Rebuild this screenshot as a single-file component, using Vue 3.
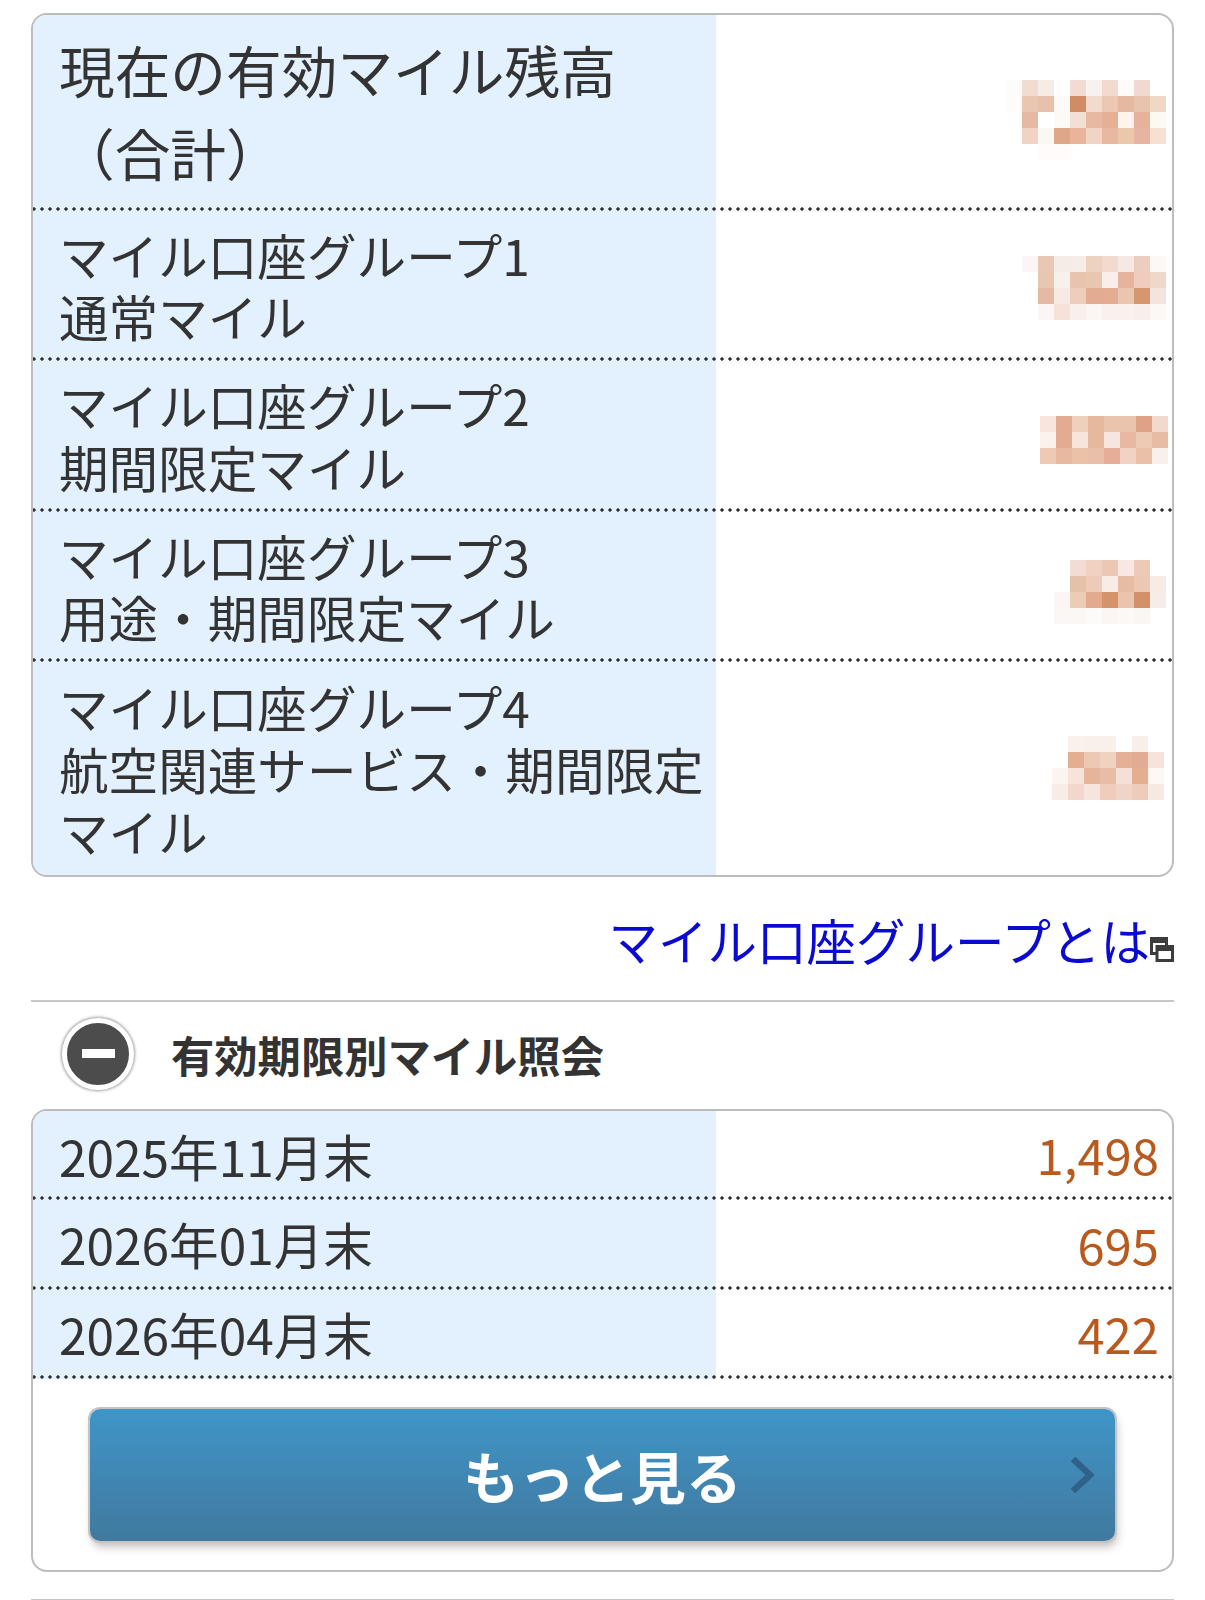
<script setup>
const hex = (s) => s.trim().split(/\s+/).map((c) => '#' + c)

const mosaics = {
  total: {
    cols: 10, right: 6, top: 9,
    cells: hex(`fefcfb f1ddcf f5ece5 ffffff f2dcd2 f8f2ee f2dace fefcfb f2d9cf ffffff
      fefcfb e8c6b0 e8c1ac fdfaf7 d08c62 f2dacc ecc8b4 e5b8a0 e8c4ae f0d8c4
      ffffff e6b9a2 ffffff fdf9f6 f4dfd5 e7b9a3 e6b096 fdf4ee e6b29b fef8f3
      ffffff f2d2c4 fbf7f3 dfa68a e8b49c f2d4c4 e8b8a0 eac8ac e6b4a0 f8e0d0
      ffffff ffffff fefbfa fefbfa ffffff ffffff ffffff ffffff ffffff ffffff`),
  },
  g1: {
    cols: 9, right: 6, top: 3.5,
    cells: hex(`faf6f3 e8c8b4 f6ece6 f6ece8 edd2c0 f2dbce f6e8e5 edcdbd fcf8f6
      ffffff e8c6b0 f8f0ec e9c3ad e9c6b0 f8eeea e6b49c efccbc f0d8c8
      ffffff e6b9a2 f6ebe3 efcdbb e3ac90 e4ac92 e9c6b0 d69670 f4e4e0
      ffffff fbf6f3 f6e2d8 f9f0ec fbf6f3 f9f1ee f9f1ee f8eeeb fbf8f5`),
  },
  g2: {
    cols: 8, right: 4, top: 5,
    cells: hex(`f8e6de e3ac90 efd0bc e6b89e ebc4ae ebc4ae e0a286 f3d8ce
      fbf2ec e3ac92 f7e4da e6b89e f7e6e0 e8b8a2 edcab4 e8bca4
      eecab6 e8b8a0 eac2a8 e8c0aa e6ae98 f2d2c4 e9c0a8 f9f0ec`),
  },
  g3: {
    cols: 7, right: 6, top: 6.5,
    cells: hex(`ffffff f2dcd4 efd2c2 ebc8b4 f9e8e2 eccab6 ffffff
      ffffff e6c0a8 ecccb8 f8ece6 e6bca4 ecc8b4 f8ebe6
      fbf6f3 ecccb4 e3aa8e d69268 eac4ac d49068 f7ede8
      fbf7f4 fbf7f4 fdfbf9 fbf5f3 fcf8f6 fbf6f2 ffffff`),
  },
  g4: {
    cols: 7, right: 8, top: -0.5,
    cells: hex(`ffffff faf0ec f9f0ea f9f0ea ffffff f9efea ffffff
      ffffff e4ae92 edc8b4 efd2c0 e6b096 e3ac92 f6e3dc
      fcf4f0 f6e4da e6b49a e8bca6 f4e0d8 e4ae90 fef8f4
      f8ece6 f2d8cc f7e4dc efccbc f0d4c8 eeccbc f8e8e2`),
  },
}

const groups = [
  { id: 'g1', lines: ['マイル口座グループ1', '通常マイル'] },
  { id: 'g2', lines: ['マイル口座グループ2', '期間限定マイル'] },
  { id: 'g3', lines: ['マイル口座グループ3', '用途・期間限定マイル'] },
  { id: 'g4', lines: ['マイル口座グループ4', '航空関連サービス・期間限定マイル'] },
]

const expiries = [
  { date: '2025年11月末', miles: '1,498' },
  { date: '2026年01月末', miles: '695' },
  { date: '2026年04月末', miles: '422' },
]

const mosaicStyle = (m) => ({
  gridTemplateColumns: `repeat(${m.cols}, 16px)`,
  marginRight: `${m.right}px`,
  marginTop: `${m.top * 2}px`,
})
</script>

<template>
  <div class="page">
    <section class="card">
      <div class="row row-total">
        <div class="label">現在の有効マイル残高<br />（合計）</div>
        <div class="value">
          <div class="mosaic" :style="mosaicStyle(mosaics.total)">
            <i v-for="(c, i) in mosaics.total.cells" :key="i" :style="{ background: c }"></i>
          </div>
        </div>
      </div>
      <div class="dots"></div>
      <template v-for="(g, n) in groups" :key="g.id">
        <div class="row row-group" :class="{ 'row-last': n === groups.length - 1 }">
          <div class="label">{{ g.lines[0] }}<br />{{ g.lines[1] }}</div>
          <div class="value">
            <div class="mosaic" :style="mosaicStyle(mosaics[g.id])">
              <i v-for="(c, i) in mosaics[g.id].cells" :key="i" :style="{ background: c }"></i>
            </div>
          </div>
        </div>
        <div v-if="n < groups.length - 1" class="dots"></div>
      </template>
    </section>

    <div class="link-line">
      <a class="link">マイル口座グループとは</a>
      <svg class="win" viewBox="0 0 24 25" width="24" height="25" aria-hidden="true">
        <path d="M1.5 1.5h15v15h-15z" fill="#fff" stroke="#3c3c3c" stroke-width="3" />
        <path d="M0 1h18v5H0z" fill="#3c3c3c" />
        <path d="M7 9.5h15.5v14H7z" fill="#fff" stroke="#3c3c3c" stroke-width="3" />
        <path d="M6 9h18v5H6z" fill="#3c3c3c" />
      </svg>
    </div>

    <hr class="rule" />

    <div class="heading">
      <span class="minus"><b></b></span>
      <h2>有効期限別マイル照会</h2>
    </div>

    <section class="card card-dates">
      <template v-for="e in expiries" :key="e.date">
        <div class="row row-date">
          <div class="label">{{ e.date }}</div>
          <div class="value miles">{{ e.miles }}</div>
        </div>
        <div class="dots"></div>
      </template>
      <div class="btn-wrap">
        <button class="more" type="button">
          もっと見る
          <svg class="chev" viewBox="0 0 24 38" width="24" height="38" aria-hidden="true">
            <path d="M3 3l17 16L3 35" fill="none" stroke="#2f6189" stroke-width="6.5" />
          </svg>
        </button>
      </div>
    </section>

    <hr class="rule rule-bottom" />
  </div>
</template>

<style>
body {
  background: #fff;
}
</style>

<style scoped>
.page {
  padding: 13px 31px 0;
  height: 1587px;
  overflow: hidden;
  font-family: "Noto Sans CJK JP", "Noto Sans", sans-serif;
  color: #333;
}
.card {
  border: 2px solid #bdbdbd;
  border-radius: 16px;
  overflow: hidden;
  background: #fff;
}
.row {
  display: grid;
  grid-template-columns: 60% 40%;
}
.label {
  background: #e2f1fd;
  padding-left: 26px;
  padding-right: 8px;
  font-size: 49.6px;
  line-height: 61.2px;
}
.value {
  display: flex;
  align-items: center;
  justify-content: flex-end;
}
.row-total .label {
  font-size: 55.7px;
  line-height: 83px;
  padding-top: 12px;
  padding-bottom: 14px;
}
.row-group .label {
  padding-top: 13px;
  padding-bottom: 11px;
}
.row-last .label {
  line-height: 62px;
  padding-bottom: 14px;
}
.row-date .label {
  padding-top: 13px;
  padding-bottom: 11px;
}
.row-date:first-child .label {
  padding-top: 14px;
  padding-bottom: 10px;
}
.mosaic {
  display: grid;
  grid-auto-rows: 16px;
}
.mosaic i {
  display: block;
}
.dots {
  height: 4px;
  background: linear-gradient(#e2f1fd, #e2f1fd) 0 0 / 60% 100% no-repeat;
  position: relative;
}
.dots::after {
  content: "";
  position: absolute;
  inset: 0;
  background: radial-gradient(circle, #2e2e2e 1.4px, transparent 1.9px) -3px 0 / 8px 4px repeat-x;
}
.link-line {
  display: flex;
  justify-content: flex-end;
  align-items: flex-end;
  margin-top: 26px;
  height: 74px;
}
.link {
  color: #0a0ad0;
  font-size: 49.5px;
  line-height: 74px;
}
.win {
  flex: none;
  margin-bottom: 15px;
}
.rule {
  border: 0;
  height: 2px;
  background: #c6c6c6;
  margin: 23px 0 0;
}
.heading {
  display: flex;
  align-items: center;
  box-sizing: border-box;
  height: 107px;
  padding-left: 31px;
  padding-bottom: 4px;
}
.minus {
  flex: none;
  width: 72px;
  height: 72px;
  box-sizing: border-box;
  border-radius: 50%;
  background: #4c4c4c;
  border: 5px solid #fff;
  box-shadow: 0 0 3px 1px #9c9c9c;
  display: flex;
  align-items: center;
  justify-content: center;
}
.minus b {
  display: block;
  width: 33px;
  height: 9px;
  background: #fff;
}
.heading h2 {
  margin: 0 0 0 37px;
  font-size: 43.3px;
  font-weight: 700;
  color: #333;
}
.card-dates {
  padding-bottom: 29px;
}
.miles {
  font-size: 49px;
  padding-right: 13px;
  color: #b85a1e;
}
.btn-wrap {
  padding: 30px 57px 0 57px;
}
.more {
  position: relative;
  display: block;
  width: 100%;
  height: 132px;
  border: 0;
  border-radius: 10px;
  background: linear-gradient(#3f95c8, #41799f);
  box-shadow: 0 0 0 2px #c4c4c4, 2px 6px 8px rgba(90, 70, 70, 0.35);
  color: #fff;
  font-family: inherit;
  font-size: 55.7px;
  font-weight: 700;
  padding: 0;
}
.chev {
  position: absolute;
  right: 21px;
  top: 47px;
}
.rule-bottom {
  margin-top: 27px;
}
</style>
